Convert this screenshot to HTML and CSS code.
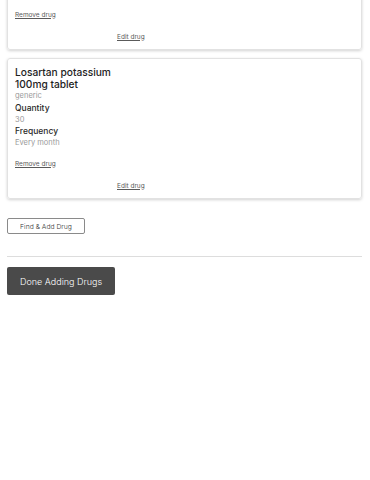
FILE: index.html
```html
<!DOCTYPE html>
<html lang="en">
<head>
    <meta charset="UTF-8">
    <meta name="viewport" content="width=device-width, initial-scale=1.0">
    <title>Drug List</title>
    <link rel="stylesheet" href="styles.css">
</head>
<body>
    <div class="drug-list">
        <!-- Kartu pertama: bagian atasnya sudah ter-scroll keluar -->
        <div class="drug-card">
            <a href="#" class="remove-link">Remove drug</a>
            <a href="#" class="edit-link">Edit drug</a>
        </div>

        <div class="drug-card">
            <h2 class="drug-name">Losartan potassium<br>100mg tablet</h2>
            <p class="value generic">generic</p>
            <p class="label">Quantity</p>
            <p class="value">30</p>
            <p class="label">Frequency</p>
            <p class="value">Every month</p>
            <a href="#" class="remove-link">Remove drug</a>
            <a href="#" class="edit-link">Edit drug</a>
        </div>
    </div>

    <button class="add-btn">Find &amp; Add Drug</button>
    <hr class="divider">
    <button class="done-btn">Done Adding Drugs</button>
</body>
</html>
```

FILE: styles.css
```css
body {
    font-family: 'Inter', 'Noto Sans', sans-serif;
    color: #222;
    margin: 0;
    padding: 0 8px 0 7px;
    background-color: #fff;
}
.drug-list {
    display: flex;
    flex-direction: column;
    gap: 8px;
    margin-top: -91px;
}
.drug-card {
    display: flex;
    flex-direction: column;
    justify-content: flex-end;
    align-items: flex-start;
    border: 1px solid #e2e2e2;
    border-radius: 3px;
    box-shadow: 0 1px 3px rgba(0, 0, 0, 0.18);
    padding: 7px 7px 6.5px;
    height: 125.5px;
}
.drug-name {
    font-size: 10.2px;
    font-weight: 500;
    line-height: 12px;
    margin: 0;
    color: #222;
}
.label {
    font-size: 8.5px;
    font-weight: 500;
    line-height: 12px;
    margin: 0;
    color: #2a2a2a;
}
.value {
    font-size: 7.5px;
    line-height: 11px;
    margin: 0;
    color: #9a9a9a;
}
.value.generic {
    line-height: 12px;
}
.remove-link,
.edit-link {
    font-size: 6.5px;
    line-height: 11px;
    color: #5a5a5a;
    text-decoration: underline;
}
.remove-link {
    margin-top: 10.5px;
}
.edit-link {
    margin-top: 11px;
    margin-left: 102px;
}
.add-btn {
    display: block;
    margin-top: 19px;
    width: 78px;
    height: 16px;
    padding: 0;
    font-family: inherit;
    font-size: 6.8px;
    font-weight: 300;
    color: #333;
    background-color: #fff;
    border: 1px solid #8a8a8a;
    border-radius: 2px;
}
.divider {
    border: none;
    border-top: 1px solid #ddd;
    margin: 22px 0 10px;
}
.done-btn {
    display: block;
    width: 108px;
    height: 28px;
    padding: 0;
    font-family: inherit;
    font-size: 9px;
    font-weight: 300;
    color: #fff;
    background-color: #4a4a4a;
    border: none;
    border-radius: 2px;
}
```
